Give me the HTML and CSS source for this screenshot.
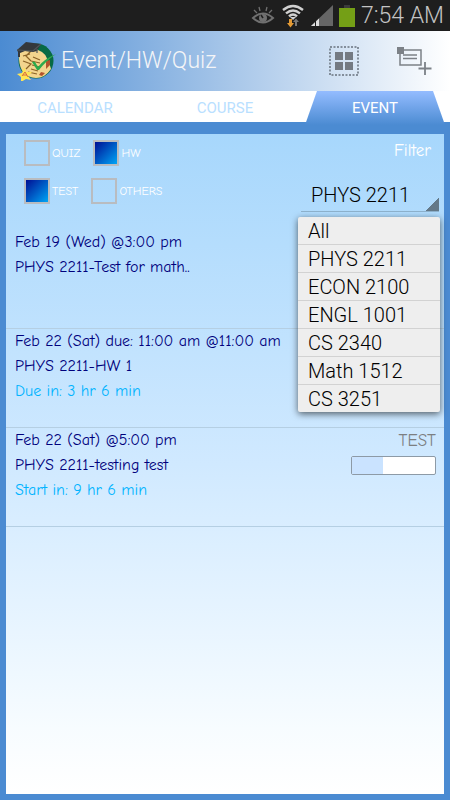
FILE: index.html
```html
<!DOCTYPE html>
<html lang="en">
<head>
<meta charset="UTF-8">
<meta name="viewport" content="width=device-width, initial-scale=1.0">
<title>Event/HW/Quiz</title>
<link rel="stylesheet" href="styles.css">
</head>
<body>

<div class="status-bar">
    <svg class="status-eye" width="24" height="20" viewBox="0 0 24 20" fill="none" stroke="#707070" stroke-width="2">
        <path d="M2 12 Q12 3 22 12 Q12 21 2 12Z"/>
        <path d="M3 4l3 3M8 1l1 4M16 1l-1 4M21 4l-3 3" stroke-width="1.300"/>
        <circle cx="12" cy="12" r="4" fill="#707070" stroke="none"/>
        <path d="M12 12l-2-3" stroke="#1e1e1e" stroke-width="1.500"/>
    </svg>
    <svg class="status-wifi" width="24" height="24" viewBox="0 0 24 24" fill="none" stroke="#d0d0d0" stroke-width="2.400">
        <path d="M2 6 Q12 -2 22 6M5 9.300 Q12 3.500 19 9.300M8 12.300 Q12 8.500 16 12.300"/>
        <path d="M9 13h6l-3 3z" fill="#d0d0d0" stroke="none"/>
        <path d="M8 15h3v4h2l-3.500 4.500-3.500-4.500h2z" fill="#e39a35" stroke="none"/>
        <path d="M14 22v-4h-2l3-3.500 3 3.500h-2v4z" fill="#777" stroke="none"/>
    </svg>
    <svg class="status-signal" width="22" height="21" viewBox="0 0 22 21">
        <path d="M0 21L22 0v21z" fill="#666"/>
        <path d="M0 21l8-7.600V21z" fill="#ddd"/>
        <path d="M4.500 16v5" stroke="#1e1e1e"/>
    </svg>
    <svg class="status-battery" width="16" height="22" viewBox="0 0 16 22">
        <path d="M5 0h6v3H5z" fill="#3b3b3b"/>
        <path d="M0 3h16v19H0z" fill="#749f16"/>
    </svg>
    <span class="status-time">7:54 AM</span>
</div>

<header class="action-bar">
    <svg class="app-logo" width="40" height="40" viewBox="0 0 40 40">
        <circle cx="20" cy="20" r="17.500" fill="#086a44"/>
        <path d="M3 18Q3 5 17 4 30 4 32 18L35 28Q29 37 20 37 4 36 3 18z" fill="#f3d58e"/>
        <path d="M22 3Q36 6 37 20L32 22Q31 12 22 9z" fill="#086a44"/>
        <path d="M30 20l4-1v5l-4 4zM25 31l4 1-3 3-3-1z" fill="#b4532c"/>
        <path d="M7 15l7-2M15 10l-5 5 5 5M7 20l8 3-5 5M17 16l7 3M15 20l9 2M16 24l8 2M15 28l7 2M12 31l9 2" fill="none" stroke="#8b6327" stroke-width="1.200"/>
        <path d="M1 9L10 1l15 2-4 7-4 1-8-1-5 2v4H2v-5z" fill="#34383b"/>
        <path d="M1 9l16 1 8-7M21 8v4" fill="none" stroke="#4f5558" stroke-width="1.200"/>
        <path d="M16 21q2-1 3 0l3 5q6-8 18-13-10 7-17 16h-2z" fill="#2caa4d"/>
        <path d="M8 26l2 5 6 0-4 4 3 4-5-1-5 3 0-5-4-3 5-1z" fill="#ffe653"/>
        <path d="M6 35l3-4 3 5m-5-2h4" fill="none" stroke="#d96a3f"/>
    </svg>
    <h1 class="app-title">Event/HW/Quiz</h1>
    <button class="action-button" aria-label="Select events">
        <svg width="30" height="30" viewBox="0 0 30 30">
            <rect x="1" y="1" width="28" height="28" fill="none" stroke="#68727e" stroke-width="1.500" stroke-dasharray="2 1.500"/>
            <path d="M6 6h8v8H6zM16 6h8v8h-8zM6 16h8v8H6zM16 16h8v8h-8z" fill="#747a82"/>
        </svg>
    </button>
    <button class="action-button" aria-label="Add event">
        <svg width="36" height="30" viewBox="0 0 36 30" fill="none" stroke="#7c8187">
            <path d="M4 4h21v15H4z" stroke-width="1.500"/>
            <path d="M7 9h14M7 12.500h14" stroke-width="1.300"/>
            <path d="M1 1h7v7H1z" fill="#7c8187" stroke="none"/>
            <path d="M29 16v13M22.500 22.500h13" stroke-width="1.800"/>
        </svg>
    </button>
</header>

<nav class="tabs">
    <a class="tab" href="#calendar">CALENDAR</a>
    <a class="tab" href="#course">COURSE</a>
    <a class="tab tab-active" href="#event">EVENT</a>
</nav>

<main class="content">
    <div class="panel">
        <form class="filters">
            <div class="types">
                <div class="type-row">
                    <label class="type"><input type="checkbox" class="type-box">QUIZ</label>
                    <label class="type"><input type="checkbox" class="type-box" checked>HW</label>
                </div>
                <div class="type-row">
                    <label class="type"><input type="checkbox" class="type-box" checked>TEST</label>
                    <label class="type"><input type="checkbox" class="type-box">OTHERS</label>
                </div>
            </div>
            <div class="course-filter">
                <label class="filter-label" for="course">Filter</label>
                <select id="course" class="spinner">
                    <option>All</option>
                    <option selected>PHYS 2211</option>
                    <option>ECON 2100</option>
                    <option>ENGL 1001</option>
                    <option>CS 2340</option>
                    <option>Math 1512</option>
                    <option>CS 3251</option>
                </select>
                <div class="menu">
                    <button type="button" class="menu-item">All</button>
                    <button type="button" class="menu-item">PHYS 2211</button>
                    <button type="button" class="menu-item">ECON 2100</button>
                    <button type="button" class="menu-item">ENGL 1001</button>
                    <button type="button" class="menu-item">CS 2340</button>
                    <button type="button" class="menu-item">Math 1512</button>
                    <button type="button" class="menu-item">CS 3251</button>
                </div>
            </div>
        </form>

        <ul class="events">
            <li class="event">
                <div class="event-info">
                    <div>Feb 19 (Wed) @3:00 pm</div>
                    <div>PHYS 2211-Test for math..</div>
                </div>
            </li>
            <li class="event">
                <div class="event-info">
                    <div>Feb 22 (Sat) due: 11:00 am @11:00 am</div>
                    <div>PHYS 2211-HW 1</div>
                    <div class="event-left">Due in: 3 hr 6 min</div>
                </div>
            </li>
            <li class="event">
                <div class="event-info">
                    <div>Feb 22 (Sat) @5:00 pm</div>
                    <div>PHYS 2211-testing test</div>
                    <div class="event-left">Start in: 9 hr 6 min</div>
                </div>
                <div class="event-side">
                    <div class="event-type">TEST</div>
                    <div class="progress"><div class="progress-fill" style="width: 37%"></div></div>
                </div>
            </li>
        </ul>
    </div>
</main>

<script>
const course = document.getElementById('course');

document.querySelectorAll('.menu-item').forEach(function(item) {
    item.addEventListener('click', function() {
        course.value = item.textContent;
    });
});
</script>

</body>
</html>
```
FILE: styles.css
```css
*, *:before, *:after {
    box-sizing: border-box;
}

body {
    margin: 0;
    min-height: 100vh;
    display: flex;
    flex-direction: column;
    background: #4b8bd2;
    font-family: Roboto, sans-serif;
}

button {
    padding: 0;
    border: none;
    background: none;
    font-family: inherit;
    cursor: pointer;
}

svg {
    display: block;
}

/* status bar */

.status-bar {
    height: 31px;
    padding: 0 6px;
    display: flex;
    align-items: center;
    justify-content: flex-end;
    gap: 6px;
    background: #1e1e1e;
}

.status-time {
    color: #c4c4c4;
    font-size: 23px;
    font-weight: 300;
    line-height: 33px;
}

/* title and actions */

.action-bar {
    height: 60px;
    padding: 0 18px 0 16px;
    display: flex;
    align-items: center;
    background: linear-gradient(to right, #4b8bd2, #fff);
}

.app-title {
    flex: 1;
    margin: 0 0 0 5px;
    color: #f4f5f7;
    font-size: 23px;
    font-weight: 300;
    line-height: 30px;
}

.action-button {
    margin-left: 37px;
}

/* tabs */

.tabs {
    height: 31px;
    display: grid;
    grid-template-columns: repeat(3, 1fr);
    background: #fff;
}

.tab {
    color: #b9e0ff;
    font-size: 15px;
    line-height: 34px;
    text-align: center;
    text-decoration: none;
}

.tab-active {
    margin: 0 5px;
    background: linear-gradient(to bottom, #94bcff, #4b8bd2);
    clip-path: polygon(12px 0, calc(100% - 12px) 0, 100% 100%, 0 100%);
    color: #fff;
}

/* content */

.content {
    flex: 1;
    display: flex;
    padding: 12px 6px 6px;
}

.panel {
    flex: 1;
    background: linear-gradient(to bottom, #a7d7fc, #d0e9ff 50%, #f7fcff 90%, #fff);
    font-family: "Comic Sans MS", "Comic Neue", "Open Sans", sans-serif;
}

.filters {
    display: flex;
    justify-content: space-between;
    height: 96px;
    padding: 6px 5px 0 18px;
}

.types {
    display: flex;
    flex-direction: column;
    gap: 12px;
}

.type-row {
    display: flex;
    gap: 13px;
}

.type {
    display: flex;
    align-items: center;
    gap: 2px;
    color: #fff;
    font-size: 12px;
}

.type-box {
    appearance: none;
    width: 26px;
    height: 26px;
    margin: 0;
    border: 2px solid #b9bcc0;
}

.type-box:checked {
    background: linear-gradient(135deg, #000f94, #00a5f5);
}

.course-filter {
    position: relative;
    width: 138px;
    display: flex;
    flex-direction: column;
    gap: 16px;
}

.filter-label {
    padding: 0 8px;
    color: #fff;
    font-size: 17px;
    line-height: 22px;
    text-align: right;
}

.spinner {
    appearance: none;
    width: 100%;
    height: 34px;
    padding: 0 10px;
    border: none;
    border-bottom: 1px solid #8eb2cd;
    border-radius: 0;
    background: linear-gradient(135deg, transparent 50%, #647989 50%) right bottom / 14px 14px no-repeat;
    color: #000;
    font: 300 20px Roboto, sans-serif;
}

.menu {
    position: absolute;
    top: 77px;
    left: -3px;
    right: -1px;
    border-radius: 2px;
    background: #eee;
    box-shadow: 0 2px 7px rgba(0, 0, 0, 0.6);
}

.menu-item {
    display: block;
    width: 100%;
    height: 28px;
    padding: 0 10px;
    border-bottom: 1px solid #d2d2d2;
    color: #000;
    font: 300 20px Roboto, sans-serif;
    text-align: left;
}

.menu-item:last-child {
    height: 27px;
    border-bottom: none;
}

/* event list */

.events {
    margin: 0;
    padding: 0;
    list-style: none;
}

.event {
    min-height: 99px;
    padding: 0 8px 0 9px;
    display: flex;
    justify-content: space-between;
    border-bottom: 1px solid #b5cfe3;
    color: #00007c;
    font-size: 16px;
    line-height: 25px;
}

.event-left {
    color: #00b4ff;
}

.event-side {
    width: 85px;
    text-align: right;
}

.event-type {
    color: #7c7f82;
    font-size: 17px;
}

.progress {
    height: 19px;
    margin-top: 3px;
    border: 1px solid #8d9aa6;
    border-radius: 2px;
    background: #fff;
}

.progress-fill {
    height: 100%;
    background: #cae3ff;
}
```
